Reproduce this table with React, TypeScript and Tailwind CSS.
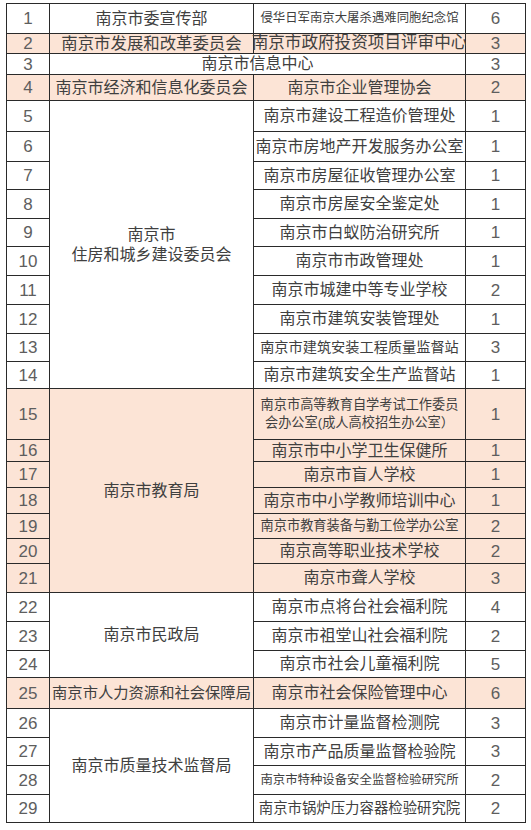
import React from 'react';

type Row = {
  n: number;
  dept?: React.ReactNode;
  deptCls?: string;
  unit?: React.ReactNode;
  unitCls?: string;
  count: number;
  pink?: boolean;
};

const rows: Row[] = [
  { n: 1, dept: '南京市委宣传部', unit: '侵华日军南京大屠杀遇难同胞纪念馆', unitCls: 'text-[12.4px]', count: 6 },
  { n: 2, dept: '南京市发展和改革委员会', deptCls: 'text-[16.4px]', unit: '南京市政府投资项目评审中心', unitCls: 'text-[16.6px]', count: 3, pink: true },
  { n: 3, dept: '南京市信息中心', deptCls: 'col-span-2 text-[16px]', count: 3 },
  { n: 4, dept: '南京市经济和信息化委员会', deptCls: 'text-[16px]', unit: '南京市企业管理协会', count: 2, pink: true },
  {
    n: 5,
    dept: (
      <span>
        <span className="block leading-[20px]">南京市</span>
        <span className="block leading-[20px]">住房和城乡建设委员会</span>
      </span>
    ),
    deptCls: 'row-span-10 text-[16px]',
    unit: '南京市建设工程造价管理处',
    count: 1,
  },
  { n: 6, unit: '南京市房地产开发服务办公室', count: 1 },
  { n: 7, unit: '南京市房屋征收管理办公室', count: 1 },
  { n: 8, unit: '南京市房屋安全鉴定处', count: 1 },
  { n: 9, unit: '南京市白蚁防治研究所', count: 1 },
  { n: 10, unit: '南京市市政管理处', count: 1 },
  { n: 11, unit: '南京市城建中等专业学校', count: 2 },
  { n: 12, unit: '南京市建筑安装管理处', count: 1 },
  { n: 13, unit: '南京市建筑安装工程质量监督站', unitCls: 'text-[14.2px]', count: 3 },
  { n: 14, unit: '南京市建筑安全生产监督站', count: 1 },
  {
    n: 15,
    dept: '南京市教育局',
    deptCls: 'row-span-7 text-[16px] bg-[#fce4d6]',
    unit: (
      <span>
        <span className="block leading-[18px]">南京市高等教育自学考试工作委员</span>
        <span className="block leading-[18px]">会办公室(成人高校招生办公室）</span>
      </span>
    ),
    unitCls: 'text-[13.2px]',
    count: 1,
    pink: true,
  },
  { n: 16, unit: '南京市中小学卫生保健所', count: 1, pink: true },
  { n: 17, unit: '南京市盲人学校', count: 1, pink: true },
  { n: 18, unit: '南京市中小学教师培训中心', count: 1, pink: true },
  { n: 19, unit: '南京市教育装备与勤工俭学办公室', unitCls: 'text-[13.2px]', count: 2, pink: true },
  { n: 20, unit: '南京高等职业技术学校', count: 2, pink: true },
  { n: 21, unit: '南京市聋人学校', count: 3, pink: true },
  { n: 22, dept: '南京市民政局', deptCls: 'row-span-3 text-[16px]', unit: '南京市点将台社会福利院', count: 4 },
  { n: 23, unit: '南京市祖堂山社会福利院', count: 2 },
  { n: 24, unit: '南京市社会儿童福利院', count: 5 },
  { n: 25, dept: '南京市人力资源和社会保障局', deptCls: 'text-[15.3px]', unit: '南京市社会保险管理中心', count: 6, pink: true },
  { n: 26, dept: '南京市质量技术监督局', deptCls: 'row-span-4 text-[16px]', unit: '南京市计量监督检测院', count: 3 },
  { n: 27, unit: '南京市产品质量监督检验院', count: 3 },
  { n: 28, unit: '南京市特种设备安全监督检验研究所', unitCls: 'text-[12.4px]', count: 2 },
  { n: 29, unit: '南京市锅炉压力容器检验研究院', unitCls: 'text-[14.4px]', count: 2 },
];

const Cell: React.FC<{ className?: string; children?: React.ReactNode }> = ({ className = '', children }) => (
  <div className={`flex items-center justify-center text-center whitespace-nowrap leading-none ${className}`}>
    {children}
  </div>
);

export default function App() {
  return (
    <div className="w-[531px] h-[830px] bg-white pt-[3px] pl-[6px] font-['Liberation_Sans','Noto_Sans_CJK_SC',sans-serif]">
      <div className="inline-grid bg-[#2a2a2a] gap-px p-px grid-cols-[42px_203px_211px_59px] grid-rows-[29px_19px_20px_25px_30px_29px_27px_28px_27px_28px_28px_28px_27px_26px_50px_21px_25px_25px_24px_24px_28px_28px_28px_26px_30px_28px_27px_28px_27px]">
        {rows.map((r) => {
          const bg = r.pink ? 'bg-[#fce4d6]' : 'bg-white';
          return (
            <React.Fragment key={r.n}>
              <Cell className={`${bg} text-[17px] text-[#5e5e5e]`}>{r.n}</Cell>
              {r.dept !== undefined && (
                <Cell className={`${bg} text-[#404040] ${r.deptCls ?? 'text-[16px]'}`}>{r.dept}</Cell>
              )}
              {r.unit !== undefined && (
                <Cell className={`${bg} text-[#404040] ${r.unitCls ?? 'text-[16px]'}`}>{r.unit}</Cell>
              )}
              <Cell className={`${bg} text-[17px] text-[#5e5e5e]`}>{r.count}</Cell>
            </React.Fragment>
          );
        })}
      </div>
    </div>
  );
}
